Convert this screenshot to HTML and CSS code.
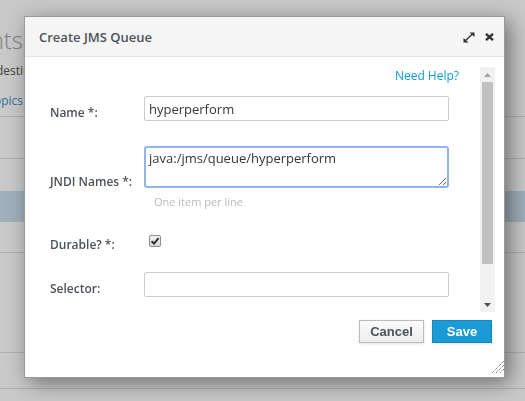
FILE: index.html
```html
<!DOCTYPE html>
<html lang="en">
<head>
<meta charset="utf-8">
<title>Create JMS Queue</title>
<link rel="stylesheet" href="styles.css">
</head>
<body>
<div class="page">
  <div class="page-head">
    <h1 class="page-title"><span>JMS Endpoints</span></h1>
    <p class="page-desc"><span>destinations for messaging</span></p>
    <div class="page-tabs"><span>Queues/Topics</span></div>
  </div>
  <div class="table">
    <div class="trow r1"></div>
    <div class="trow r2"></div>
    <div class="trow r3"></div>
    <div class="trow r4"></div>
    <div class="trow r5"></div>
    <div class="trow r6"></div>
  </div>
</div>
<div class="overlay"></div>
<div class="dialog">
  <div class="dialog-header">
    <div class="dialog-title">Create JMS Queue</div>
    <span class="hicon expand"><svg width="12" height="11" viewBox="0 0 12 11"><path d="M2.5 8.5 L9.5 2" stroke="#333" stroke-width="1.4"/><polygon points="6.5,0.5 11.5,0.5 11.5,5" fill="#333"/><polygon points="0.5,6 0.5,10.5 5.5,10.5" fill="#333"/></svg></span>
    <span class="hicon close"><svg width="9" height="8" viewBox="0 0 9 8"><path d="M1 0.8 L8 7.2 M8 0.8 L1 7.2" stroke="#333" stroke-width="2.3"/></svg></span>
  </div>
  <div class="dialog-body">
    <div class="scroll">
      <div class="scroll-content">
        <div class="help-row"><a class="help" href="#">Need Help?</a></div>
        <div class="form-row row-name">
          <label class="label">Name *:</label>
          <div class="value"><input class="text-input" type="text" value="hyperperform"></div>
        </div>
        <div class="form-row row-jndi">
          <label class="label">JNDI Names *:</label>
          <div class="value">
            <textarea class="textarea">java:/jms/queue/hyperperform</textarea>
            <div class="hint">One item per line</div>
          </div>
        </div>
        <div class="form-row row-durable">
          <label class="label">Durable? *:</label>
          <div class="value check-cell"><span class="checkbox"><svg width="10" height="10" viewBox="0 0 10 10"><path d="M1.6 5.2 L4 7.6 L8.6 2.2" fill="none" stroke="#2b2b2b" stroke-width="2"/></svg></span></div>
        </div>
        <div class="form-row row-selector">
          <label class="label">Selector:</label>
          <div class="value"><input class="text-input" type="text" value=""></div>
        </div>
      </div>
      <div class="scrollbar">
        <div class="sb-btn"><svg width="7" height="4" viewBox="0 0 7 4"><polygon points="3.5,0 7,4 0,4" fill="#a3a3a3"/></svg></div>
        <div class="sb-track"><div class="sb-thumb"></div></div>
        <div class="sb-btn"><svg width="7" height="4" viewBox="0 0 7 4"><polygon points="0,0 7,0 3.5,4" fill="#505050"/></svg></div>
      </div>
    </div>
    <div class="dialog-footer">
      <button class="btn btn-cancel">Cancel</button>
      <button class="btn btn-save">Save</button>
    </div>
  </div>
  <span class="grip"><svg width="12" height="12" viewBox="0 0 12 12"><path d="M12 0 L0 12 M12 4 L4 12 M12 8 L8 12" stroke="#555" stroke-width="1" stroke-dasharray="1 1"/></svg></span>
</div>
</body>
</html>
```
FILE: styles.css
```css
* { box-sizing: border-box; }
html, body { margin: 0; padding: 0; }
body {
  width: 525px;
  height: 401px;
  overflow: hidden;
  position: relative;
  background: #fff;
  font-family: "Open Sans", "Liberation Sans", sans-serif;
  color: #4d5258;
}
.page { width: 525px; height: 401px; }
.page-head { display: flex; flex-direction: column; }
.page-title {
  display: flex;
  justify-content: flex-end;
  width: 23px;
  margin: 26px 0 0;
  font-size: 24px;
  font-weight: 300;
  line-height: 28px;
  color: #a6a6a6;
  white-space: nowrap;
}
.page-desc {
  margin: 8px 0 0;
  font-size: 12px;
  line-height: 18px;
  color: #555;
  white-space: nowrap;
}
.page-desc span { display: block; margin-left: -4px; }
.page-tabs {
  display: flex;
  justify-content: flex-end;
  width: 23px;
  margin-top: 12px;
  padding-bottom: 6px;
  font-size: 12px;
  line-height: 18px;
  color: #3f8dc4;
  white-space: nowrap;
}
.table { border-top: 1px solid #e0e0e0; }
.trow { border-bottom: 1px solid #e0e0e0; }
.r1 { height: 42px; }
.r2 { height: 32px; border-bottom: none; }
.r3 { height: 31px; background: #cbe0ee; border-bottom: none; }
.r4 { height: 31px; }
.r5 { height: 100px; }
.r6 { height: 36px; }

.overlay { position: fixed; inset: 0; background: rgba(0, 0, 0, 0.21); }

.dialog {
  position: absolute;
  left: 24px;
  top: 16px;
  width: 481px;
  height: 362px;
  background: #fff;
  border: 1px solid #999;
  box-shadow: 5px 5px 20px rgba(0, 0, 0, 0.45);
  display: flex;
  flex-direction: column;
}
.dialog-header {
  flex: none;
  height: 40px;
  background: #f5f5f5;
  border-bottom: 1px solid #e5e5e5;
  display: flex;
  align-items: center;
  padding: 0 10px 0 14px;
}
.dialog-title {
  flex: 1;
  font-size: 13px;
  font-weight: 600;
  color: #4d5258;
}
.hicon { display: flex; }
.expand { margin-right: 10px; margin-top: 1px; }
.close { margin-top: 1px; }

.dialog-body { flex: 1; display: flex; flex-direction: column; padding: 10px 9px 0 15px; }
.scroll { display: flex; height: 245px; flex: none; }
.scroll-content { flex: 1; overflow: hidden; padding: 0 21px 0 10px; }
.help-row { text-align: right; font-size: 12px; line-height: 18px; }
.help { color: #0f9bd7; text-decoration: none; }

.form-row { display: grid; grid-template-columns: 94px 305px; align-items: center; }
.label {
  font-size: 12px;
  font-weight: 600;
  line-height: 17px;
  padding-top: 7px;
  color: #4d5258;
}
.row-name { margin-top: 11px; }
.row-jndi { margin-top: 25px; }
.row-durable { margin-top: 18px; }
.row-selector { margin-top: 19px; }

.text-input {
  display: block;
  width: 305px;
  height: 25px;
  border: 1px solid #ccc;
  border-radius: 2px;
  padding: 0 4px;
  font-family: "Open Sans", "Liberation Sans", sans-serif;
  font-size: 13px;
  color: #363636;
  background: #fff;
  outline: none;
}
.textarea {
  display: block;
  width: 305px;
  height: 42px;
  border: 2px solid #8fb4f0;
  border-radius: 3px;
  padding: 1px 3px;
  font-family: "Open Sans", "Liberation Sans", sans-serif;
  font-size: 13px;
  line-height: 18px;
  color: #363636;
  outline: none;
  resize: vertical;
}
.hint {
  margin-top: 6px;
  padding-left: 10px;
  font-size: 11px;
  line-height: 16px;
  color: #bbb;
}
.check-cell { height: 25px; display: flex; align-items: center; }
.checkbox {
  margin-left: 5px;
  width: 12px;
  height: 12px;
  border: 1px solid #8a8a8a;
  border-radius: 2px;
  background: linear-gradient(#f4f4f4, #d6d6d6);
  display: flex;
  align-items: center;
  justify-content: center;
}

.scrollbar { width: 15px; flex: none; background: #f1f1f1; display: flex; flex-direction: column; }
.sb-btn { height: 15px; display: flex; align-items: center; justify-content: center; }
.sb-track { flex: 1; padding: 0 2px; }
.sb-thumb { height: 182px; background: #c1c1c1; }

.dialog-footer { display: flex; justify-content: flex-end; gap: 8px; padding: 8px 3px 0 0; }
.btn {
  height: 23px;
  padding: 0;
  font-family: "Liberation Sans", Arial, sans-serif;
  font-size: 13px;
  font-weight: bold;
  cursor: pointer;
  box-shadow: 0 1px 3px rgba(0, 0, 0, 0.12);
}
.btn-cancel {
  width: 65px;
  background: linear-gradient(#fbfbfb, #ececec);
  border: 1px solid #bbb;
  color: #4d5258;
}
.btn-save {
  width: 60px;
  background: #1a9bd5;
  border: 1px solid #1c86bb;
  color: #fff;
}
.grip { position: absolute; right: 0; bottom: 4px; display: flex; }
```
